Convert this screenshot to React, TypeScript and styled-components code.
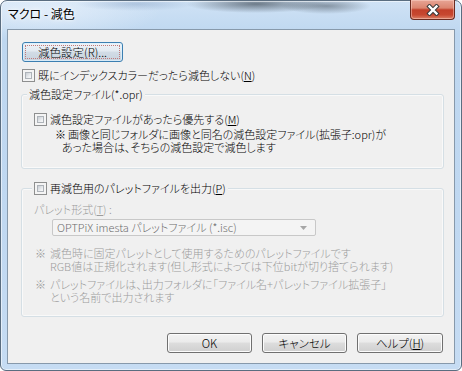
import styled, { createGlobalStyle } from 'styled-components';

const GlobalStyle = createGlobalStyle`
  html, body {
    margin: 0;
    padding: 0;
    background: #fff;
  }
  body {
    font-family: "Noto Sans CJK JP", "Noto Sans", sans-serif;
    font-size: 11px;
    font-weight: 300;
    font-feature-settings: "palt";
    color: #000;
  }
`;

const U = styled.span`
  text-decoration: underline;
  text-underline-offset: 1px;
`;

const Checkbox = () => <Box />;

const App = () => {
  return (
    <>
      <GlobalStyle />
      <Window>
        <TitleBar>
          <Title>マクロ - 減色</Title>
          <CloseButton>
            <svg width="14" height="12" viewBox="0 0 14 12">
              <path d="M3.5 2.5 L10.5 9.5 M10.5 2.5 L3.5 9.5" stroke="#3a3a3a" strokeWidth="4.4" strokeLinecap="square" />
              <path d="M3.5 2.5 L10.5 9.5 M10.5 2.5 L3.5 9.5" stroke="#fff" strokeWidth="2.4" strokeLinecap="square" />
            </svg>
          </CloseButton>
        </TitleBar>

        <Client>
          <Button $w={101} $focused>
            減色設定(R)...
          </Button>

          <CheckRow $top={7} $left={1}>
            <Checkbox />
            <span>既にインデックスカラーだったら減色しない(<U>N</U>)</span>
          </CheckRow>

          <Group $top={12} $bottom={14}>
            <Legend $left={-7}>減色設定ファイル(*.opr)</Legend>
            <CheckRow $top={13}>
              <Checkbox />
              <span>減色設定ファイルがあったら優先する(<U>M</U>)</span>
            </CheckRow>
            <Note $top={2} $left={21}>
              <NoteLine>
                <Mark $w={13}>※</Mark>画像と同じフォルダに画像と同名の減色設定ファイル(拡張子:opr)が
              </NoteLine>
              <NoteLine $indent={7}>あった場合は、そちらの減色設定で減色します</NoteLine>
            </Note>
          </Group>

          <Group $top={19} $bottom={12}>
            <Legend $left={-2}>
              <CheckRow>
                <Checkbox />
                <span>再減色用のパレットファイルを出力(<U>P</U>)</span>
              </CheckRow>
            </Legend>
            <DisabledLabel>
              パレット形式(<U>T</U>) :
            </DisabledLabel>
            <Combo>
              <span>OPTPiX imesta パレットファイル (*.isc)</span>
              <svg width="7" height="4" viewBox="0 0 7 4">
                <path d="M0 0 H7 L3.5 4 Z" fill="#a6a6a6" />
              </svg>
            </Combo>
            <Note $top={11} $left={1} $disabled>
              <NoteLine>
                <Mark $w={15}>※</Mark>減色時に固定パレットとして使用するためのパレットファイルです
              </NoteLine>
              <NoteLine $indent={15}>RGB値は正規化されます(但し形式によっては下位bitが切り捨てられます)</NoteLine>
            </Note>
            <Note $top={5} $left={1} $disabled>
              <NoteLine>
                <Mark $w={15}>※</Mark>パレットファイルは、出力フォルダに「ファイル名+パレットファイル拡張子」
              </NoteLine>
              <NoteLine $indent={15}>という名前で出力されます</NoteLine>
            </Note>
          </Group>

          <ButtonRow>
            <Button $w={85}>OK</Button>
            <Button $w={85}>キャンセル</Button>
            <Button $w={86}>ヘルプ(<U>H</U>)</Button>
          </ButtonRow>
        </Client>
      </Window>
    </>
  );
};

const Window = styled.div`
  width: 462px;
  height: 371px;
  box-sizing: border-box;
  display: flex;
  flex-direction: column;
  padding: 0 6px 6px;
  border: 1px solid #5a6d80;
  border-radius: 7px 7px 6px 6px;
  background:
    radial-gradient(ellipse 70px 9px at 255px 3px, rgba(45, 55, 65, 0.6), transparent),
    radial-gradient(ellipse 45px 8px at 325px 5px, rgba(45, 55, 65, 0.45), transparent),
    radial-gradient(ellipse 60px 7px at 135px 3px, rgba(110, 140, 180, 0.35), transparent),
    radial-gradient(ellipse 120px 30px at 40px 10px, rgba(235, 243, 252, 0.7), transparent),
    linear-gradient(to bottom, #cfe2f5 0%, #bed7f0 9%, #c0d8f1 60%, #c6dcf3 100%);
  box-shadow: inset 0 0 0 1px rgba(255, 255, 255, 0.55);
`;

const TitleBar = styled.div`
  height: 28px;
  flex: none;
  display: flex;
  align-items: flex-start;
`;

const Title = styled.div`
  padding: 7px 0 0 1px;
  line-height: 12px;
  font-size: 12px;
  font-weight: 400;
  text-shadow: 0 0 6px rgba(255, 255, 255, 0.9), 0 0 3px rgba(255, 255, 255, 0.9);
`;

const CloseButton = styled.div`
  width: 45px;
  height: 20px;
  margin: -1px 0 0 auto;
  box-sizing: border-box;
  display: flex;
  align-items: center;
  justify-content: center;
  border: 1px solid #6a2b20;
  border-top: none;
  border-radius: 0 0 4px 4px;
  background: linear-gradient(#e7a595 0%, #db8570 42%, #c2402a 52%, #c74830 78%, #dc8167 100%);
  box-shadow: inset 0 0 0 1px rgba(255, 220, 210, 0.45);
`;

const Client = styled.div`
  flex: 1;
  display: flex;
  flex-direction: column;
  align-items: flex-start;
  padding: 12px 10px 0 13px;
  background: #f0f0f0;
  border: 1px solid #8799ab;
`;

const Button = styled.button<{ $w: number; $focused?: boolean }>`
  position: relative;
  width: ${(p) => p.$w}px;
  height: 20px;
  margin-left: ${(p) => (p.$focused ? 1 : 0)}px;
  padding: 0;
  box-sizing: border-box;
  font: inherit;
  font-size: 11.5px;
  line-height: 16px;
  font-feature-settings: "palt";
  color: #000;
  border: 1px solid ${(p) => (p.$focused ? '#3c7fb1' : '#707070')};
  border-radius: 3px;
  background: ${(p) =>
    p.$focused
      ? 'linear-gradient(#eef3f8, #e3eaf1 45%, #d2dce6 50%, #c8d3de)'
      : 'linear-gradient(#f2f2f2, #ebebeb 45%, #dddddd 50%, #cfcfcf)'};
  box-shadow: inset 0 0 0 1px ${(p) => (p.$focused ? 'rgba(220,240,252,0.8)' : '#fcfcfc')};

  &::after {
    content: "";
    display: ${(p) => (p.$focused ? 'block' : 'none')};
    position: absolute;
    inset: 2px;
    border: 1px dotted #c07a7a;
  }
`;

const CheckRow = styled.div<{ $top?: number; $left?: number }>`
  display: flex;
  align-items: center;
  gap: 3px;
  height: 13px;
  line-height: 13px;
  margin-top: ${(p) => p.$top ?? 0}px;
  margin-left: ${(p) => p.$left ?? 0}px;
  white-space: nowrap;
`;

const Box = styled.span`
  flex: none;
  width: 13px;
  height: 13px;
  box-sizing: border-box;
  padding: 2px;
  border: 1px solid #8e8f8f;
  background: #f4f4f4;

  &::before {
    content: "";
    display: block;
    width: 100%;
    height: 100%;
    box-sizing: border-box;
    border: 1px solid #aeb3b9;
    background: linear-gradient(135deg, #c9ced4, #eef0f2 70%, #f7f7f7);
  }
`;

const Group = styled.div<{ $top: number; $bottom: number }>`
  align-self: stretch;
  display: flex;
  flex-direction: column;
  align-items: flex-start;
  margin-top: ${(p) => p.$top}px;
  padding: 0 12px ${(p) => p.$bottom}px;
  border: 1px solid #d5dfe5;
  border-radius: 3px;
  box-shadow: inset 0 0 0 1px rgba(255, 255, 255, 0.6);
`;

const Legend = styled.div<{ $left: number }>`
  margin: -7px 0 0 ${(p) => p.$left}px;
  padding: 0 2px;
  line-height: 12px;
  background: #f0f0f0;
  white-space: nowrap;
`;

const Note = styled.div<{ $top: number; $left: number; $disabled?: boolean }>`
  margin: ${(p) => p.$top}px 0 0 ${(p) => p.$left}px;
  line-height: 13px;
  color: ${(p) => (p.$disabled ? '#9c9c9c' : '#000')};
  white-space: nowrap;
`;

const NoteLine = styled.div<{ $indent?: number }>`
  height: 13px;
  padding-left: ${(p) => p.$indent ?? 0}px;
`;

const Mark = styled.span<{ $w: number }>`
  display: inline-block;
  width: ${(p) => p.$w}px;
`;

const DisabledLabel = styled.div`
  margin-top: 8px;
  line-height: 12px;
  color: #9c9c9c;
`;

const Combo = styled.div`
  width: 264px;
  height: 17px;
  box-sizing: border-box;
  margin: 4px 0 0 18px;
  padding: 0 8px 0 4px;
  display: flex;
  align-items: center;
  justify-content: space-between;
  border: 1px solid #c8c8c8;
  border-radius: 2px;
  background: #f4f4f4;
  color: #6d6d6d;
  line-height: 15px;
  white-space: nowrap;
`;

const ButtonRow = styled.div`
  align-self: stretch;
  display: flex;
  justify-content: flex-end;
  gap: 10px;
  margin: 16px 1px 0 0;
`;

export default App;
